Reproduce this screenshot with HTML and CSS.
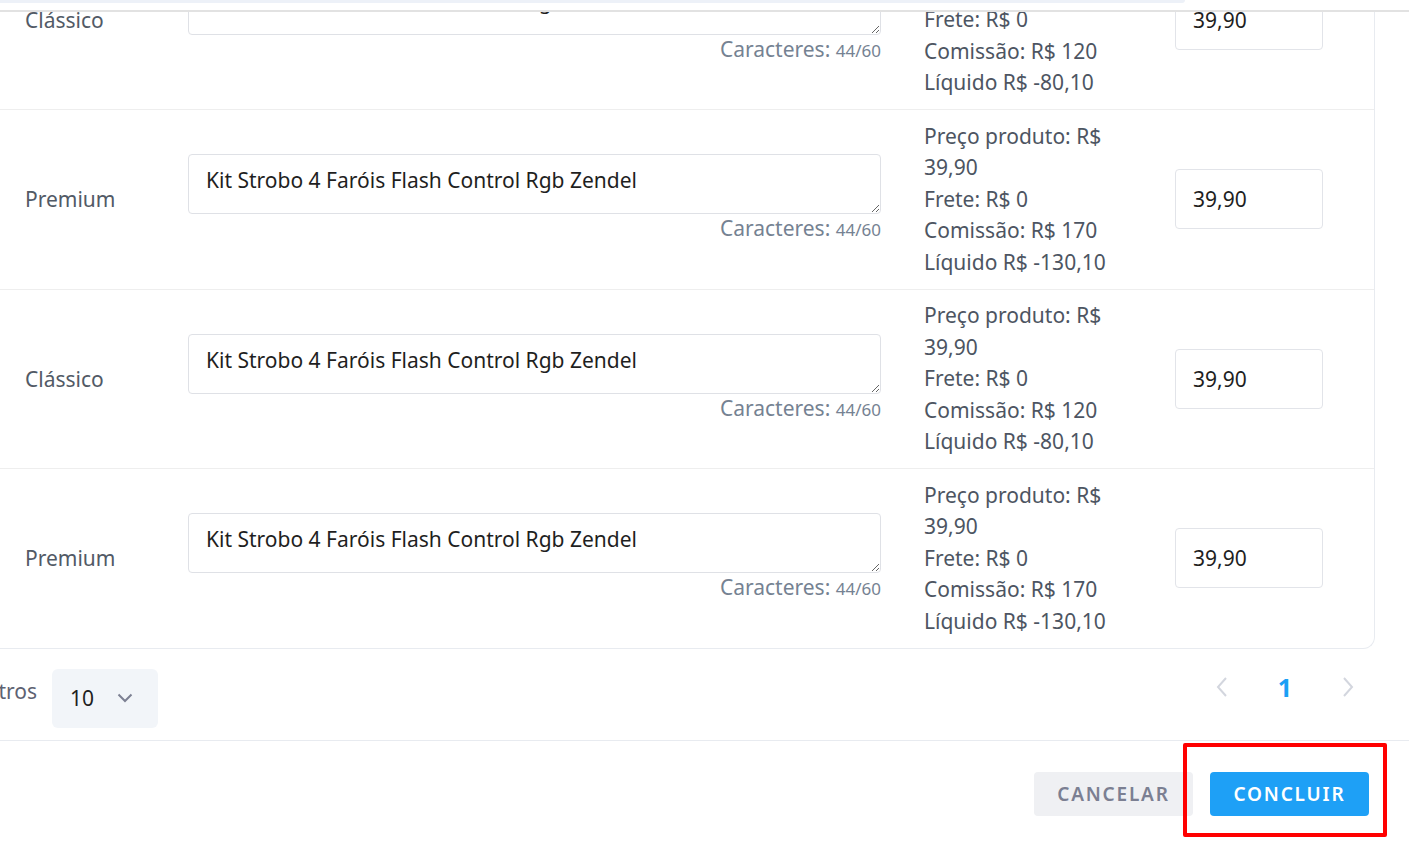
FILE: index.html
```html
<!DOCTYPE html>
<html lang="pt-BR">
<head>
  <meta charset="UTF-8" />
  <meta name="viewport" content="width=device-width, initial-scale=1.0"/>
  <title>Publicar anúncios</title>
  <link rel="stylesheet" href="styles.css">
</head>
<body>
  <!-- sticky header edge over the scrolled list -->
  <div class="top-shade"><div class="top-bar"></div></div>

  <main class="modal-body">
    <div class="listing-card">
      <div class="listing-row">
        <div class="ad-type">Clássico</div>
        <div class="title-cell">
          <textarea class="title-input" rows="1">Kit Strobo 4 Faróis Flash Control Rgb Zendel</textarea>
          <div class="char-count">Caracteres: <small>44/60</small></div>
        </div>
        <div class="price-info">
          <div>Preço produto: R$ 39,90</div>
          <div>Frete: R$ 0</div>
          <div>Comissão: R$ 120</div>
          <div>Líquido R$ -80,10</div>
        </div>
        <input class="price-input" type="text" value="39,90">
      </div>

      <div class="listing-row">
        <div class="ad-type">Premium</div>
        <div class="title-cell">
          <textarea class="title-input" rows="1">Kit Strobo 4 Faróis Flash Control Rgb Zendel</textarea>
          <div class="char-count">Caracteres: <small>44/60</small></div>
        </div>
        <div class="price-info">
          <div>Preço produto: R$ 39,90</div>
          <div>Frete: R$ 0</div>
          <div>Comissão: R$ 170</div>
          <div>Líquido R$ -130,10</div>
        </div>
        <input class="price-input" type="text" value="39,90">
      </div>

      <div class="listing-row">
        <div class="ad-type">Clássico</div>
        <div class="title-cell">
          <textarea class="title-input" rows="1">Kit Strobo 4 Faróis Flash Control Rgb Zendel</textarea>
          <div class="char-count">Caracteres: <small>44/60</small></div>
        </div>
        <div class="price-info">
          <div>Preço produto: R$ 39,90</div>
          <div>Frete: R$ 0</div>
          <div>Comissão: R$ 120</div>
          <div>Líquido R$ -80,10</div>
        </div>
        <input class="price-input" type="text" value="39,90">
      </div>

      <div class="listing-row">
        <div class="ad-type">Premium</div>
        <div class="title-cell">
          <textarea class="title-input" rows="1">Kit Strobo 4 Faróis Flash Control Rgb Zendel</textarea>
          <div class="char-count">Caracteres: <small>44/60</small></div>
        </div>
        <div class="price-info">
          <div>Preço produto: R$ 39,90</div>
          <div>Frete: R$ 0</div>
          <div>Comissão: R$ 170</div>
          <div>Líquido R$ -130,10</div>
        </div>
        <input class="price-input" type="text" value="39,90">
      </div>
    </div>

    <div class="pager-bar">
      <span class="per-page-label"><span>Registros</span></span>
      <div class="per-page-select">
        <span>10</span>
        <svg width="16" height="10" viewBox="0 0 16 10"><path d="M1.5 1.5 8 8l6.5-6.5" fill="none" stroke="#7d8093" stroke-width="2"/></svg>
      </div>
      <div class="pagination">
        <span class="page-arrow"><svg width="12" height="20" viewBox="0 0 12 20"><path d="M10 1 2 10l8 9" fill="none" stroke="#d3d6de" stroke-width="2"/></svg></span>
        <span class="page-num">1</span>
        <span class="page-arrow"><svg width="12" height="20" viewBox="0 0 12 20"><path d="M2 1l8 9-8 9" fill="none" stroke="#d3d6de" stroke-width="2"/></svg></span>
      </div>
    </div>
  </main>

  <footer class="modal-footer">
    <button class="btn btn-cancel">CANCELAR</button>
    <button class="btn btn-confirm">CONCLUIR</button>
    <div class="highlight-box"></div>
  </footer>
</body>
</html>
```

FILE: styles.css
```css
body {
  font-family: 'Noto Sans', 'Open Sans', sans-serif;
  margin: 0;
  padding: 0;
  background-color: #fff;
  overflow: hidden;
  height: 852px;
  position: relative;
}
.top-shade {
  position: absolute;
  top: 0;
  left: 0;
  right: 0;
  height: 10px;
  background: #fff;
  border-bottom: 2px solid #e2e2e2;
  z-index: 5;
}
.top-bar {
  width: 1185px;
  height: 3px;
  background: #edf1f8;
  border-radius: 0 0 8px 0;
}
.modal-body {
  margin-top: -69.5px;
  padding-right: 34px;
}
.listing-card {
  border-right: 1px solid #e8ebf0;
  border-bottom: 1px solid #e8ebf0;
  border-radius: 0 0 12px 0;
}
.listing-row {
  display: grid;
  grid-template-columns: 163px 693px 294px 148px;
  align-items: center;
  padding: 10.5px 0 10.5px 25px;
  border-bottom: 1px solid #eeeeee;
}
.listing-row:last-child {
  border-bottom: none;
}
.ad-type {
  font-size: 21px;
  color: #525a66;
}
.title-cell {
  display: flex;
  flex-direction: column;
  align-items: stretch;
}
.title-input {
  box-sizing: border-box;
  height: 60px;
  padding: 11px 17px;
  font-family: inherit;
  font-size: 21px;
  line-height: 28px;
  color: #1f1f1f;
  border: 1px solid #dfe1e6;
  border-radius: 4px;
  overflow: hidden;
  resize: vertical;
}
.char-count {
  text-align: right;
  font-size: 21px;
  line-height: 28px;
  color: #758292;
}
.char-count small {
  font-size: 17px;
}
.price-info {
  padding: 0 60px 0 43px;
  font-size: 21px;
  line-height: 31.5px;
  color: #4d5562;
}
.price-input {
  box-sizing: border-box;
  width: 148px;
  height: 60px;
  padding: 0 17px;
  font-family: inherit;
  font-size: 21px;
  color: #1f1f1f;
  border: 1px solid #e2e4e9;
  border-radius: 4px;
}
.pager-bar {
  display: flex;
  align-items: flex-start;
  height: 91px;
  padding: 0 7px 0 0;
}
.per-page-label {
  width: 37px;
  display: flex;
  justify-content: flex-end;
  overflow: hidden;
  white-space: nowrap;
  font-size: 21px;
  line-height: 28px;
  color: #5d6272;
  margin: 28px 15px 0 0;
}
.per-page-select {
  box-sizing: border-box;
  width: 106px;
  height: 59px;
  padding: 0 25px 0 18px;
  margin-top: 20px;
  display: flex;
  align-items: center;
  justify-content: space-between;
  background: #f2f5f9;
  border-radius: 6px;
  font-size: 21px;
  color: #1f1f1f;
}
.pagination {
  margin: 24px 0 0 auto;
  display: flex;
  align-items: center;
  gap: 23px;
  height: 28px;
}
.pagination span {
  width: 40px;
  display: flex;
  justify-content: center;
}
.page-num {
  font-size: 25px;
  font-weight: 700;
  color: #1c9ff5;
}
.modal-footer {
  position: relative;
  border-top: 1px solid #e8ebf0;
  display: flex;
  justify-content: flex-end;
  gap: 17px;
  padding: 31px 40px;
}
.btn {
  width: 159px;
  height: 44px;
  border: none;
  border-radius: 4px;
  font-family: inherit;
  font-size: 19px;
  font-weight: 600;
  letter-spacing: 1.8px;
  cursor: pointer;
}
.btn-cancel {
  background: #eff0f3;
  color: #7b7f92;
}
.btn-confirm {
  background: #1ea0f6;
  color: #fff;
}
.highlight-box {
  position: absolute;
  top: 2px;
  right: 22px;
  width: 204px;
  height: 94px;
  box-sizing: border-box;
  border: 4px solid #f00;
  border-radius: 2px;
}
```
